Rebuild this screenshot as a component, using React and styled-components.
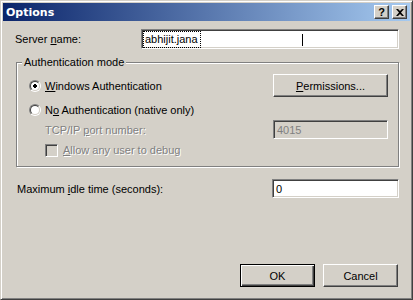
import React from "react";
import styled, { createGlobalStyle } from "styled-components";

const GlobalStyle = createGlobalStyle`
  html, body {
    margin: 0;
    padding: 0;
    background: #d4d0c8;
  }
  body {
    font-family: "Liberation Sans", Arial, sans-serif;
    font-size: 11px;
    color: #000;
  }
`;

const Window = styled.div`
  box-sizing: border-box;
  width: 413px;
  height: 300px;
  background: #d4d0c8;
  border: 1px solid;
  border-color: #d4d0c8 #404040 #404040 #d4d0c8;
  box-shadow: inset 1px 1px 0 #fff, inset -1px -1px 0 #808080;
  padding: 2px;
  display: flex;
  flex-direction: column;
`;

const TitleBar = styled.div`
  height: 18px;
  display: flex;
  align-items: center;
  padding: 0 3px 0 3px;
  background: linear-gradient(to right, #0a246a, #a6caf0);
  color: #fff;
  font-weight: bold;
  font-family: "DejaVu Sans", "Liberation Sans", sans-serif;
  font-size: 11px;
`;

const Title = styled.span`
  flex: 1;
`;

const TitleButton = styled.div`
  box-sizing: border-box;
  width: 15px;
  height: 14px;
  margin-left: ${(p) => (p.$gap ? "3px" : "0")};
  background: #d4d0c8;
  border: 1px solid;
  border-color: #fff #404040 #404040 #fff;
  box-shadow: inset -1px -1px 0 #808080;
  display: flex;
  align-items: center;
  justify-content: center;
  color: #000;
  font-weight: bold;
  font-size: 11px;
  font-family: "Liberation Sans", sans-serif;
`;

const Body = styled.div`
  flex: 1;
  display: flex;
  flex-direction: column;
  padding: 8px 11px 10px 12px;
`;

const FieldRow = styled.div`
  display: grid;
  grid-template-columns: ${(p) => p.$cols};
  align-items: center;
  margin-top: ${(p) => p.$top || 0}px;
  padding-left: ${(p) => p.$indent || 0}px;
`;

const TextBox = styled.div`
  box-sizing: border-box;
  height: ${(p) => p.$h || 20}px;
  background: ${(p) => (p.$disabled ? "#d4d0c8" : "#fff")};
  color: ${(p) => (p.$disabled ? "#808080" : "#000")};
  border: 1px solid;
  border-color: #808080 #fff #fff #808080;
  box-shadow: inset 1px 1px 0 #404040, inset -1px -1px 0 #d4d0c8;
  padding: 0 3px;
  display: flex;
  align-items: center;
  position: relative;
`;

const Selection = styled.span`
  border: 1px dotted #000;
  padding: 1px 2px 2px 1px;
  margin-left: -2px;
`;

const Caret = styled.span`
  position: absolute;
  left: 160px;
  top: 4px;
  width: 1px;
  height: 12px;
  background: #000;
`;

const Key = styled.u`
  text-decoration: underline;
`;

const GroupBox = styled.fieldset`
  margin: 7px 0 0 1px;
  padding: 5px 10px 9px 12px;
  border: 1px solid #808080;
  box-shadow: 1px 1px 0 #fff, inset 1px 1px 0 #fff;
  min-width: 0;
`;

const Legend = styled.legend`
  padding: 0 2px;
  margin-left: -7px;
  background: #d4d0c8;
  line-height: 13px;
`;

const GroupRow = styled.div`
  display: flex;
  align-items: center;
  height: ${(p) => p.$h}px;
  margin-top: ${(p) => p.$top || 0}px;
  padding-left: ${(p) => p.$indent || 0}px;
`;

const Spacer = styled.div`
  flex: 1;
`;

const Radio = styled.span`
  box-sizing: border-box;
  width: 12px;
  height: 12px;
  border-radius: 50%;
  border: 1px solid;
  border-color: #808080 #fff #fff #808080;
  background: #d4d0c8;
  display: inline-flex;
  margin-right: 4px;
  flex: none;
  &::after {
    content: "";
    box-sizing: border-box;
    width: 10px;
    height: 10px;
    border-radius: 50%;
    border: 1px solid;
    border-color: #404040 #d4d0c8 #d4d0c8 #404040;
    background: #fff
      ${(p) =>
        p.$checked
          ? "radial-gradient(circle, #000 0, #000 2px, transparent 2.1px)"
          : "none"};
  }
`;

const CheckBox = styled.span`
  box-sizing: border-box;
  width: 13px;
  height: 13px;
  border: 1px solid;
  border-color: #808080 #fff #fff #808080;
  box-shadow: inset 1px 1px 0 #404040, inset -1px -1px 0 #d4d0c8;
  background: #d4d0c8;
  margin-right: 5px;
  flex: none;
`;

const Label = styled.span`
  color: ${(p) => (p.$disabled ? "#808080" : "#000")};
  text-shadow: ${(p) => (p.$disabled ? "1px 1px 0 #fff" : "none")};
  white-space: nowrap;
`;

const Button = styled.button`
  box-sizing: border-box;
  width: ${(p) => p.$w || 75}px;
  height: 23px;
  padding: 0;
  background: #d4d0c8;
  font: inherit;
  color: #000;
  border: 1px solid;
  border-color: ${(p) =>
    p.$default ? "#000" : "#fff #404040 #404040 #fff"};
  box-shadow: ${(p) =>
    p.$default
      ? "inset 1px 1px 0 #fff, inset -1px -1px 0 #404040, inset -2px -2px 0 #808080"
      : "inset -1px -1px 0 #808080"};
`;

const ButtonRow = styled.div`
  display: flex;
  justify-content: flex-end;
  gap: 8px;
  padding-right: 1px;
`;

function CloseGlyph() {
  return (
    <svg width="8" height="7" viewBox="0 0 8 7">
      <path d="M0 0h2l2 2 2-2h2L5 3.5 8 7H6L4 5 2 7H0l3-3.5z" fill="#000" />
    </svg>
  );
}

export default function App() {
  return (
    <>
      <GlobalStyle />
      <Window>
        <TitleBar>
          <Title>Options</Title>
          <TitleButton>?</TitleButton>
          <TitleButton $gap>
            <CloseGlyph />
          </TitleButton>
        </TitleBar>
        <Body>
          <FieldRow $cols="126px 1fr">
            <Label>
              Server <Key>n</Key>ame:
            </Label>
            <TextBox>
              <Selection>abhijit.jana</Selection>
              <Caret />
            </TextBox>
          </FieldRow>

          <GroupBox>
            <Legend>Authentication mode</Legend>
            <GroupRow $h={23}>
              <Radio $checked />
              <Label>
                <Key>W</Key>indows Authentication
              </Label>
              <Spacer />
              <Button $w={115}>
                <Key>P</Key>ermissions...
              </Button>
            </GroupRow>
            <GroupRow $h={16} $top={5}>
              <Radio />
              <Label>
                N<Key>o</Key> Authentication (native only)
              </Label>
            </GroupRow>
            <GroupRow $h={19} $top={2} $indent={16}>
              <Label $disabled>
                TCP/IP <Key>p</Key>ort number:
              </Label>
              <Spacer />
              <TextBox $h={19} $disabled style={{ width: 115 }}>
                4015
              </TextBox>
            </GroupRow>
            <GroupRow $h={14} $top={4} $indent={16}>
              <CheckBox />
              <Label $disabled>
                <Key>A</Key>llow any user to debug
              </Label>
            </GroupRow>
          </GroupBox>

          <FieldRow $cols="1fr 127px" $top={12} $indent={2}>
            <Label>
              Maximum <Key>i</Key>dle time (seconds):
            </Label>
            <TextBox $h={19}>0</TextBox>
          </FieldRow>

          <Spacer />
          <ButtonRow>
            <Button $default>OK</Button>
            <Button>Cancel</Button>
          </ButtonRow>
        </Body>
      </Window>
    </>
  );
}
